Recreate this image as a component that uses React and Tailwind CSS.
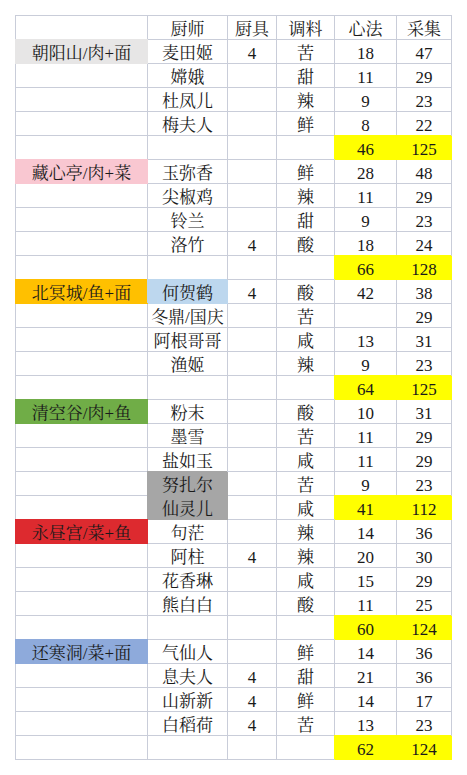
import React from "react";

const GRID = "border-[#c9cdd9]";

const FILL = {
  gray: "bg-[#e7e6e6] border-[#e7e6e6] shadow-[0_-1px_0_0_#e7e6e6]",
  pink: "bg-[#f9c7d1] border-[#f9c7d1] shadow-[0_-1px_0_0_#f9c7d1]",
  orange: "bg-[#ffc000] border-[#ffc000] shadow-[0_-1px_0_0_#ffc000]",
  green: "bg-[#70ad47] border-[#70ad47] shadow-[0_-1px_0_0_#70ad47]",
  red: "bg-[#dd2a2f] border-[#dd2a2f] shadow-[0_-1px_0_0_#dd2a2f]",
  blue: "bg-[#8eaadb] border-[#8eaadb] shadow-[0_-1px_0_0_#8eaadb]",
  lightblue: "bg-[#bdd7ee] border-[#bdd7ee] shadow-[-1px_-1px_0_0_#bdd7ee]",
  darkgray: "bg-[#a6a6a6] border-[#a6a6a6] shadow-[-1px_-1px_0_0_#a6a6a6]",
  yellow: "bg-[#ffff00] border-[#ffff00] shadow-[-1px_-1px_0_0_#ffff00]",
};

const groups = [
  {
    name: "朝阳山/肉+面",
    fill: "gray",
    rows: [
      ["麦田姬", "4", "苦", "18", "47"],
      ["嫦娥", "", "甜", "11", "29"],
      ["杜凤儿", "", "辣", "9", "23"],
      ["梅夫人", "", "鲜", "8", "22"],
    ],
    sum: ["46", "125"],
  },
  {
    name: "藏心亭/肉+菜",
    fill: "pink",
    rows: [
      ["玉弥香", "", "鲜", "28", "48"],
      ["尖椒鸡", "", "辣", "11", "29"],
      ["铃兰", "", "甜", "9", "23"],
      ["洛竹", "4", "酸", "18", "24"],
    ],
    sum: ["66", "128"],
  },
  {
    name: "北冥城/鱼+面",
    fill: "orange",
    rows: [
      ["何贺鹤", "4", "酸", "42", "38", "lightblue"],
      ["冬鼎/国庆", "", "苦", "", "29"],
      ["阿根哥哥", "", "咸", "13", "31"],
      ["渔姬", "", "辣", "9", "23"],
    ],
    sum: ["64", "125"],
  },
  {
    name: "清空谷/肉+鱼",
    fill: "green",
    rows: [
      ["粉末", "", "酸", "10", "31"],
      ["墨雪", "", "苦", "11", "29"],
      ["盐如玉", "", "咸", "11", "29"],
      ["努扎尔", "", "苦", "9", "23", "darkgray"],
      ["仙灵儿", "", "咸", "41", "112", "darkgray", true],
    ],
    sum: null,
  },
  {
    name: "永昼宫/菜+鱼",
    fill: "red",
    rows: [
      ["句茫", "", "辣", "14", "36"],
      ["阿柱", "4", "辣", "20", "30"],
      ["花香琳", "", "咸", "15", "29"],
      ["熊白白", "", "酸", "11", "25"],
    ],
    sum: ["60", "124"],
  },
  {
    name: "还寒洞/菜+面",
    fill: "blue",
    rows: [
      ["气仙人", "", "鲜", "14", "36"],
      ["息夫人", "4", "甜", "21", "36"],
      ["山新新", "4", "鲜", "14", "17"],
      ["白稻荷", "4", "苦", "13", "23"],
    ],
    sum: ["62", "124"],
  },
];

function Cell({ children, fill, first, header }) {
  const color = fill ? FILL[fill] : GRID;
  return (
    <div
      className={
        "flex items-end justify-center whitespace-nowrap border-r border-b leading-[18px] " +
        (first ? "border-l " : "") +
        (header ? "border-t h-[25px] " : "h-[24px] ") +
        color
      }
    >
      <span>{children}</span>
    </div>
  );
}

export default function App() {
  const cells = [];
  let k = 0;
  const header = ["", "厨师", "厨具", "调料", "心法", "采集"];
  header.forEach((h, i) => {
    cells.push(
      <Cell key={k++} first={i === 0} header>
        {h}
      </Cell>
    );
  });
  groups.forEach((g) => {
    g.rows.forEach((r, ri) => {
      const [chef, tool, spice, xf, cj, chefFill, sumRow] = r;
      cells.push(
        <Cell key={k++} first fill={ri === 0 ? g.fill : undefined}>
          {ri === 0 ? g.name : ""}
        </Cell>
      );
      cells.push(
        <Cell key={k++} fill={chefFill}>
          {chef}
        </Cell>
      );
      cells.push(<Cell key={k++}>{tool}</Cell>);
      cells.push(<Cell key={k++}>{spice}</Cell>);
      cells.push(
        <Cell key={k++} fill={sumRow ? "yellow" : undefined}>
          {xf}
        </Cell>
      );
      cells.push(
        <Cell key={k++} fill={sumRow ? "yellow" : undefined}>
          {cj}
        </Cell>
      );
    });
    if (g.sum) {
      cells.push(<Cell key={k++} first />);
      cells.push(<Cell key={k++} />);
      cells.push(<Cell key={k++} />);
      cells.push(<Cell key={k++} />);
      cells.push(
        <Cell key={k++} fill="yellow">
          {g.sum[0]}
        </Cell>
      );
      cells.push(
        <Cell key={k++} fill="yellow">
          {g.sum[1]}
        </Cell>
      );
    }
  });

  return (
    <div className="min-h-[775px] w-[467px] bg-white pl-[15px] pt-[15px] text-[17px] text-[#1a1a1a] font-['Liberation_Serif','Noto_Serif_CJK_SC','Noto_Sans_CJK_SC',serif]">
      <div className="grid w-max grid-cols-[133px_80px_49px_58px_62px_55px]">
        {cells}
      </div>
    </div>
  );
}
